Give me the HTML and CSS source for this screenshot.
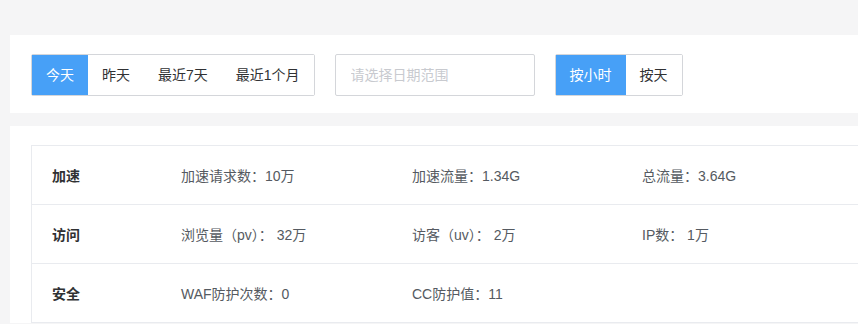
FILE: index.html
```html
<!DOCTYPE html>
<html lang="zh-CN">
<head>
<meta charset="utf-8">
<title>统计</title>
<link rel="stylesheet" href="styles.css">
</head>
<body>
<div class="page">
  <section class="card filter-card">
    <div class="btn-group">
      <button class="btn active">今天</button>
      <button class="btn">昨天</button>
      <button class="btn">最近7天</button>
      <button class="btn">最近1个月</button>
    </div>
    <div class="date-input">
      <input type="text" placeholder="请选择日期范围">
    </div>
    <div class="btn-group">
      <button class="btn active">按小时</button>
      <button class="btn">按天</button>
    </div>
  </section>
  <section class="card table-card">
    <div class="stats">
      <div class="row">
        <div class="cell label">加速</div>
        <div class="cell">加速请求数：10万</div>
        <div class="cell">加速流量：1.34G</div>
        <div class="cell">总流量：3.64G</div>
      </div>
      <div class="row">
        <div class="cell label">访问</div>
        <div class="cell">浏览量（pv）： 32万</div>
        <div class="cell">访客（uv）： 2万</div>
        <div class="cell">IP数： 1万</div>
      </div>
      <div class="row">
        <div class="cell label">安全</div>
        <div class="cell">WAF防护次数：0</div>
        <div class="cell">CC防护值：11</div>
        <div class="cell"></div>
      </div>
    </div>
  </section>
</div>
</body>
</html>
```

FILE: styles.css
```css
html, body {
  margin: 0;
  padding: 0;
  overflow: hidden;
  background: #f5f5f6;
}
body {
  font-family: "Liberation Sans", "Noto Sans CJK SC", sans-serif;
  font-size: 14px;
  color: #606266;
}
.page {
  width: 880px;
  padding: 35px 0 0 10px;
  display: flex;
  flex-direction: column;
  gap: 13px;
}
.card {
  background: #fff;
}
.filter-card {
  display: flex;
  align-items: flex-start;
  gap: 20px;
  height: 78px;
  padding: 19px 21px 0;
  box-sizing: border-box;
}
.btn-group {
  display: flex;
  border: 1px solid #d4d6da;
  border-radius: 2px;
  height: 42px;
  box-sizing: border-box;
}
.btn {
  font: inherit;
  color: #303133;
  background: #fff;
  border: 0;
  padding: 0 14px;
  margin: 0;
  height: 40px;
  line-height: 40px;
  cursor: pointer;
}
.btn.active {
  background: #47a0f7;
  color: #fff;
}
.date-input {
  width: 200px;
  height: 42px;
  box-sizing: border-box;
  border: 1px solid #d4d6da;
  border-radius: 2px;
  display: flex;
  align-items: center;
}
.date-input input {
  border: 0;
  outline: 0;
  font: inherit;
  width: 100%;
  padding: 0 15px;
  background: transparent;
}
.date-input input::placeholder {
  color: #c8cacf;
}
.table-card {
  padding: 19px 0 0 21px;
}
.stats {
  border-left: 1px solid #e9ebef;
  border-top: 1px solid #e9ebef;
}
.row {
  display: grid;
  grid-template-columns: 129px 231px 230px 1fr;
  height: 59px;
  box-sizing: border-box;
  border-bottom: 1px solid #e9ebef;
  align-items: center;
}
.cell {
  padding-left: 20px;
  color: #555a61;
  white-space: pre;
}
.cell.label {
  font-weight: bold;
  color: #303133;
}
```
